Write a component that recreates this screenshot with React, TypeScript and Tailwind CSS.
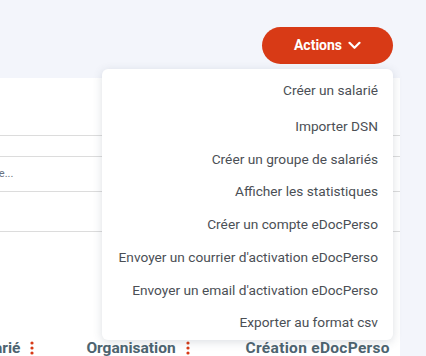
import React from "react";

const items = [
  "Créer un salarié",
  "Importer DSN",
  "Créer un groupe de salariés",
  "Afficher les statistiques",
  "Créer un compte eDocPerso",
  "Envoyer un courrier d'activation eDocPerso",
  "Envoyer un email d'activation eDocPerso",
  "Exporter au format csv",
];

function Dots() {
  return (
    <svg width="4" height="14" viewBox="0 0 4 14" className="ml-[10px] shrink-0">
      <circle cx="2" cy="2" r="1.6" fill="#d83a16" />
      <circle cx="2" cy="7" r="1.6" fill="#d83a16" />
      <circle cx="2" cy="12" r="1.6" fill="#d83a16" />
    </svg>
  );
}

export default function App() {
  return (
    <div
      className="relative h-[356px] w-[426px] overflow-hidden bg-[#f3f5fb]"
      style={{ fontFamily: "Roboto, 'Liberation Sans', sans-serif" }}
    >
      <div className="flex justify-end pr-[33px] pt-[27px]">
        <button className="flex h-[37px] w-[131px] items-center justify-center gap-[6px] rounded-full bg-[#d83a16] text-[14px] font-bold text-white">
          <span>Actions</span>
          <svg width="13" height="9" viewBox="0 0 13 9" fill="none">
            <path d="M1.5 1.8 L6.5 6.8 L11.5 1.8" stroke="white" strokeWidth="2.2" strokeLinecap="round" strokeLinejoin="round" />
          </svg>
        </button>
      </div>

      <div className="mt-[14px] flex h-[280px] w-[400px] flex-col overflow-hidden bg-white">
        <div className="h-[58px] shrink-0 border-b border-[#dcdcdc]" />
        <div className="h-[21px] shrink-0 border-b border-[#dcdcdc]" />
        <div className="flex h-[35px] shrink-0 items-center border-b border-[#dcdcdc] text-[11px] text-[#6b7280]">
          <span className="-ml-[7px]">ée...</span>
        </div>
        <div className="h-[40px] shrink-0 border-b border-[#dcdcdc]" />
        <div className="flex flex-1 items-end whitespace-nowrap text-[15.5px] leading-[20px] font-bold text-[#4d6470]">
          <div className="flex shrink-0 items-center -ml-[28px]">
            <span>Salarié</span>
            <Dots />
          </div>
          <div className="ml-[52px] flex shrink-0 items-center">
            <span>Organisation</span>
            <Dots />
          </div>
          <div className="ml-[56px] flex shrink-0 items-center">
            <span className="tracking-[0.3px]">Création eDocPerso</span>
          </div>
        </div>
      </div>

      <div className="absolute left-[102px] top-[69px] w-[291px] rounded-[6px] bg-white pb-[1px] pt-[11px] shadow-[0_2px_10px_rgba(60,80,100,0.18)]">
        {items.map((t, i) => (
          <div
            key={t}
            className={`flex items-center justify-end pr-[15px] text-[13.7px] text-[#4b4f55] ${i === 0 ? "h-[20px] mb-[10px]" : "h-[32.7px]"}`}
          >
            {t}
          </div>
        ))}
      </div>
    </div>
  );
}
